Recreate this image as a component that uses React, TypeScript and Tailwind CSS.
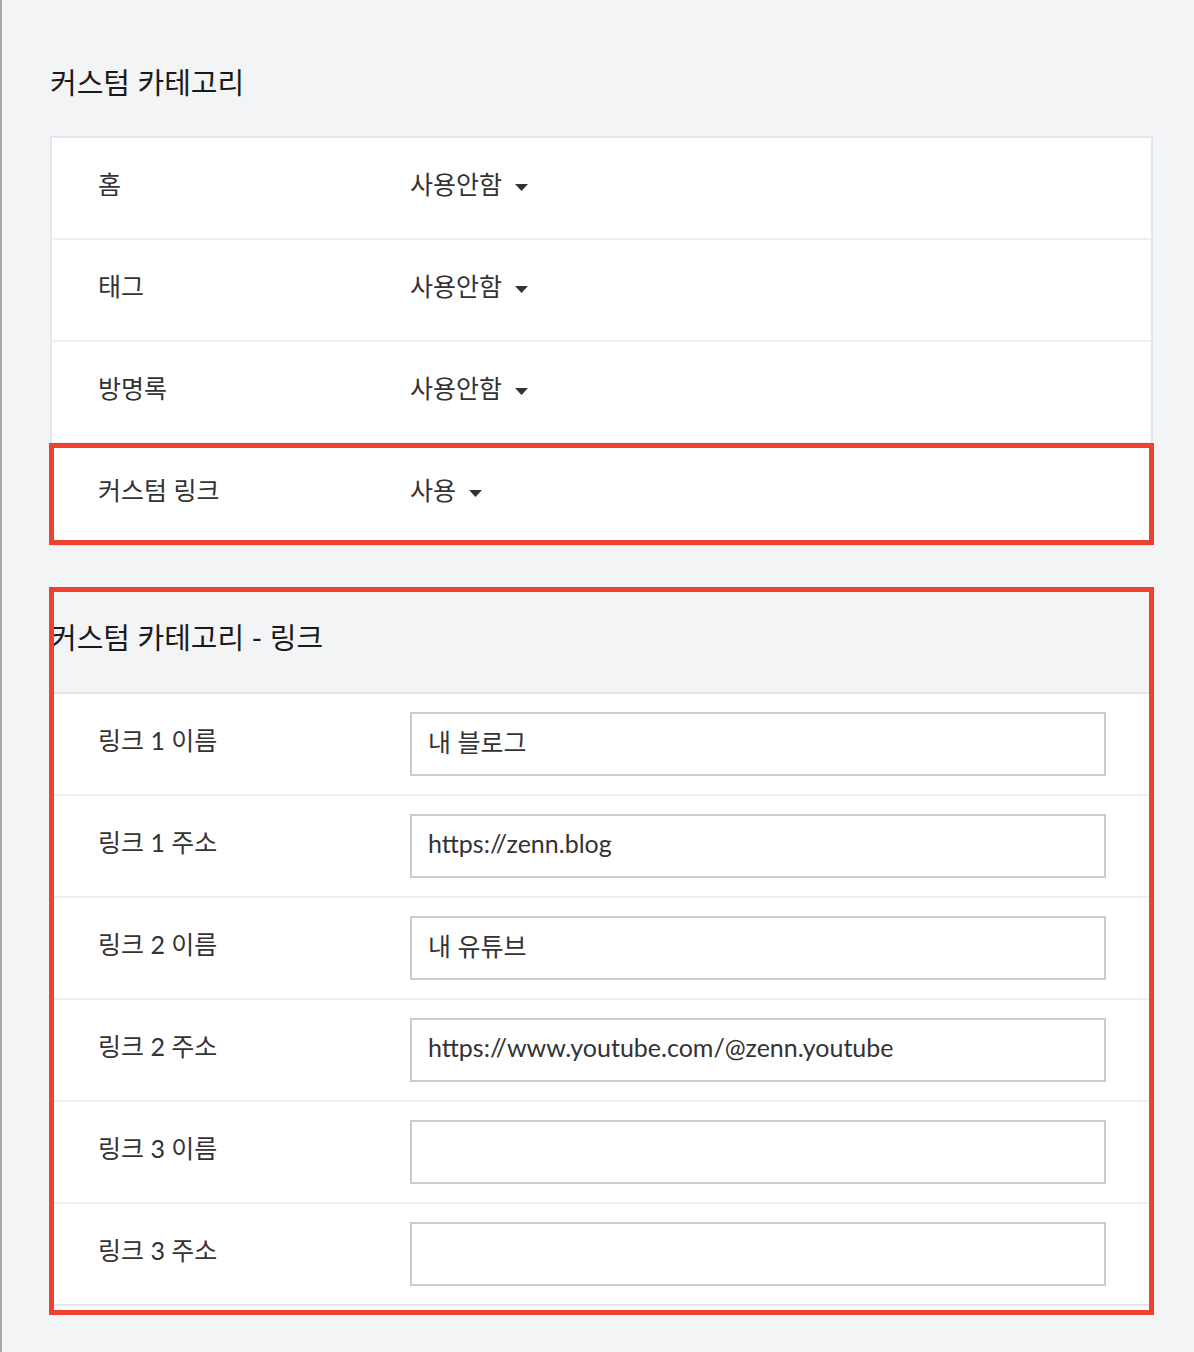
import { useState } from "react";

const FONT = "font-['Lato','Noto_Sans_CJK_KR',sans-serif]";

type Toggle = { label: string; value: string };

const toggles: Toggle[] = [
  { label: "홈", value: "사용안함" },
  { label: "태그", value: "사용안함" },
  { label: "방명록", value: "사용안함" },
];

const linkFields = [
  { label: "링크 1 이름", value: "내 블로그" },
  { label: "링크 1 주소", value: "https://zenn.blog" },
  { label: "링크 2 이름", value: "내 유튜브" },
  { label: "링크 2 주소", value: "https://www.youtube.com/@zenn.youtube" },
  { label: "링크 3 이름", value: "" },
  { label: "링크 3 주소", value: "" },
];

function Caret() {
  return (
    <svg width="13" height="7" viewBox="0 0 13 7" className="ml-[13px] mt-[4px]">
      <path d="M0 0h13L6.5 7z" fill="#333" />
    </svg>
  );
}

function SelectRow({ label, value, last }: Toggle & { last?: boolean }) {
  return (
    <div className={`flex items-center pl-[46px] pb-[6px] ${last ? "h-[100px]" : "h-[102px] border-b-2 border-[#eef0f4]"}`}>
      <div className="w-[312px] text-[25px] text-[#333]">{label}</div>
      <button className="flex items-center text-[25px] text-[#333]">
        {value}
        <Caret />
      </button>
    </div>
  );
}

function InputRow({ label, value, last }: { label: string; value: string; last?: boolean }) {
  const [v, setV] = useState(value);
  return (
    <div className={`flex items-center h-[102px] pl-[48px] pr-[47px] border-b-2 ${last ? "border-[#e3e6ed]" : "border-[#eef0f4]"}`}>
      <div className="w-[312px] shrink-0 pb-[6px] text-[25px] text-[#333]">{label}</div>
      <input
        value={v}
        onChange={(e) => setV(e.target.value)}
        className={`flex-1 h-[64px] border-2 border-[#c8ccd6] bg-white pl-4 pr-4 pb-[6px] text-[25px] text-[#333] outline-none ${FONT}`}
      />
    </div>
  );
}

export default function App() {
  return (
    <div className={`min-h-[1352px] bg-[#f3f4f6] border-l-2 border-[#a9a9ab] pl-[48px] pr-[41px] ${FONT}`}>
      <h2 className="pt-[64px] text-[29px] leading-[38px] text-[#1a1a1a]">커스텀 카테고리</h2>

      <div className="mt-[34px] bg-white border-2 border-[#e3e6ed]">
        {toggles.map((t) => (
          <SelectRow key={t.label} {...t} />
        ))}
        <div className="relative">
          <SelectRow label="커스텀 링크" value="사용" last />
          <div className="absolute -top-px -bottom-px -left-[3px] -right-[3px] border-[5px] border-[#ee4130] pointer-events-none" />
        </div>
      </div>

      <div className="relative mt-[44px] mb-[37px]">
        <div className="flex items-center h-[104px] pb-[6px] border-b-2 border-[#e3e6ed] text-[29px] text-[#1a1a1a]">
          커스텀 카테고리 - 링크
        </div>
        <div className="bg-white pb-[6px]">
          {linkFields.map((f, i) => (
            <InputRow key={f.label} {...f} last={i === linkFields.length - 1} />
          ))}
        </div>
        <div className="absolute -top-[3px] -bottom-[3px] -left-px -right-px border-[5px] border-[#ee4130] pointer-events-none" />
      </div>
    </div>
  );
}
